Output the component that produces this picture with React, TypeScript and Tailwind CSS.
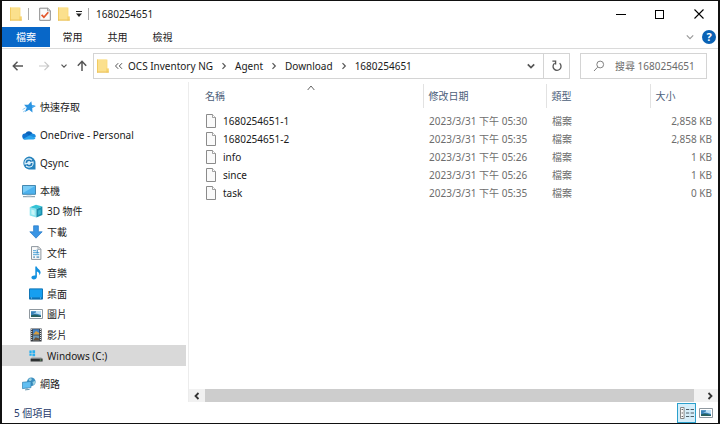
import type { ReactNode } from "react";

const icon = "h-3.5 w-3.5 shrink-0";

function Folder() {
  return (
    <svg viewBox="0 0 14 14" className={icon} aria-hidden="true">
      <path d="M1 .6h10.4v12.9H1z" fill="#f9d978" />
      <path d="M1.6 .6h9v12H1.6z" fill="#fbe08d" />
      <path d="M1 .6h1v12.9H1z" fill="#f2cb62" />
      <path d="M10.4 9.4h2.4v4.1h-2.4z" fill="#f7d26c" />
      <path d="M1 12.7h11.8v.8H1z" fill="#e6bc55" />
    </svg>
  );
}

function Checklist() {
  return (
    <svg viewBox="0 0 14 14" className={icon} aria-hidden="true">
      <path d="M1.7 1.2h8l2.6 2.4v9.7H1.7z" fill="#fafafa" stroke="#8a8a8a" />
      <path d="M9.5 1.2v2.6h2.8" fill="none" stroke="#8a8a8a" strokeWidth=".8" />
      <path d="M3.6 7.8l2.3 2.4 4.4-5" fill="none" stroke="#e2562b" strokeWidth="1.7" />
    </svg>
  );
}

function FileIcon() {
  return (
    <svg viewBox="0 0 12 14" className="h-3.5 w-3 shrink-0" aria-hidden="true">
      <path d="M1.5 .5h6l3 3v10h-9z" fill="#fafafa" stroke="#8b8b8b" />
      <path d="M7.5 .5v3h3" fill="#fff" stroke="#8b8b8b" strokeWidth=".8" />
    </svg>
  );
}

function Star() {
  return (
    <svg viewBox="0 0 14 14" className={icon} aria-hidden="true">
      <path d="M9.3 1.2l.6 3.9 3.8.8-3.5 2.2.3 4.5-3.4-2.8-4.2 2.1 1.8-4.2-2.6-3 4.1.1z" fill="#2b93e0" />
      <path d="M9.3 1.2l.6 3.9 3.8.8-3.5 2.2z" fill="#49aaf0" />
      <path d="M.6 9.6l3-1.8M1.2 11.9l2.4-1.6" stroke="#7fc3f0" strokeWidth=".9" />
    </svg>
  );
}

function Cloud() {
  return (
    <svg viewBox="0 0 14 14" className={icon} aria-hidden="true">
      <path d="M3.4 5.4a4 4 0 0 1 7.2.4L7 8.4 2 6.4z" fill="#0a62b8" />
      <path d="M3 5.5a3 3 0 0 1 2.4.5l5.4 4.6-8.2.9A3 3 0 0 1 .2 8.6 3 3 0 0 1 3 5.5z" fill="#1173cf" />
      <path d="M7.4 7.6c.8-1.2 2-1.9 3.3-1.8a3 3 0 0 1 3.1 2.9l-2.6 1.5z" fill="#1a8be0" />
      <path d="M7.3 7.6l6.3 2.2a2.3 2.3 0 0 1-2.2 1.7H2.8a2.7 2.7 0 0 1-1.7-.6z" fill="#2aa5ee" />
    </svg>
  );
}

function Qsync() {
  return (
    <svg viewBox="0 0 14 14" className={icon} aria-hidden="true">
      <path d="M7 .5a6.5 6.5 0 0 1 6.5 6.5v6.4H7A6.5 6.5 0 0 1 7 .5z" fill="#2583bd" />
      <circle cx="7" cy="7" r="4.7" fill="#d9eefa" />
      <circle cx="7" cy="7" r="2.7" fill="none" stroke="#2079b5" strokeWidth="1.6" strokeDasharray="6.6 1.8" />
      <path d="M8.6 5.4h2.6V2.9zM5.4 8.6H2.8v2.5z" fill="#2079b5" />
    </svg>
  );
}

function Monitor() {
  return (
    <svg viewBox="0 0 14 14" className={icon} aria-hidden="true">
      <path d="M.5 1.5h13v8.8H.5z" fill="#4db2ee" stroke="#4489b1" />
      <path d="M1 2h12L1 9z" fill="#7accf6" />
      <path d="M1 12.7h12" stroke="#7790a0" strokeWidth="1" />
      <path d="M4.5 12h5" stroke="#b7c5ce" />
    </svg>
  );
}

function Cube() {
  return (
    <svg viewBox="0 0 14 14" className={icon} aria-hidden="true">
      <path d="M.7 3.2L7.4 4.9v8.6L.7 11.4z" fill="#8fe6f0" />
      <path d="M.7 3.2L7 .8l6.4 1.8-6 2.3z" fill="#35c3d6" />
      <path d="M7.4 4.9l6-2.3v8.3l-6 2.6z" fill="#1a8fae" />
      <path d="M2.4 5.6l3.2.8v4.8l-3.2-1z" fill="#c9f5f8" />
      <path d="M9.2 6.4l2.6-1v4.4l-2.6 1.1z" fill="#39b3cc" />
    </svg>
  );
}

function DownArrow() {
  return (
    <svg viewBox="0 0 14 14" className={icon} aria-hidden="true">
      <path d="M4.6 .8h4.8v6h3.8L7 13.2.8 6.8h3.8z" fill="#3a95e4" stroke="#2478c8" strokeWidth=".7" />
    </svg>
  );
}

function Document() {
  return (
    <svg viewBox="0 0 14 14" className={icon} aria-hidden="true">
      <path d="M2.5 .6h6.8l2.6 2.6v10.2H2.5z" fill="#fbfbfb" stroke="#8f989f" />
      <path d="M9 .6v2.8h2.9" fill="none" stroke="#8f989f" strokeWidth=".8" />
      <path d="M4 4.7h3M4 6.7h6.3M4 8.7h6.3" stroke="#4ba3d8" />
      <path d="M4.2 10.3h1.8v1.8H4.2zM7.5 10.3h2.7v1.8H7.5z" fill="#78aaca" />
      <path d="M7.7 3.5h1v4h-1z" fill="#3181bc" />
    </svg>
  );
}

function Music() {
  return (
    <svg viewBox="0 0 14 14" className={icon} aria-hidden="true">
      <path d="M6.3 .4h1.4c.4 2.2 4.1 3.2 3.9 6.2-.1 1.2-.6 2-1.4 2.6.6-2.3-.9-3.2-2.3-3.7v5.3c0 1.5-1.4 2.7-3.1 2.7-1.4 0-2.4-.8-2.4-1.9 0-1.5 1.9-2.5 3.9-2.1z" fill="#1491df" />
    </svg>
  );
}

function Desktop() {
  return (
    <svg viewBox="0 0 14 14" className={icon} aria-hidden="true">
      <path d="M.5 1.9h13v10.2H.5z" fill="#169ff0" stroke="#1276b6" />
      <path d="M1 10.6h12v1H1z" fill="#0b5d99" />
      <path d="M2 11h1M11 11h1" stroke="#a9dcfa" strokeWidth=".8" />
    </svg>
  );
}

function Picture() {
  return (
    <svg viewBox="0 0 14 14" className={icon} aria-hidden="true">
      <path d="M.5 2.5h13v9H.5z" fill="#fff" stroke="#8f989f" />
      <path d="M2 4h10v6H2z" fill="#bfe2f7" />
      <path d="M2 4.2h5v1.3L4 6.5l4 .3L12 8v2H2z" fill="#3a83b9" />
      <path d="M2 8.2l4-.6 6 1.4v1H2z" fill="#27605f" />
    </svg>
  );
}

function Film() {
  return (
    <svg viewBox="0 0 14 14" className={icon} aria-hidden="true">
      <path d="M1.6 .5h11v13h-11z" fill="#383d43" />
      <path d="M2.7 1v12M11.5 1v12" stroke="#dfe5ea" strokeDasharray="1 1" />
      <path d="M4 1.3h6.2v5.2H4z" fill="#4382c6" />
      <path d="M4 7.4h6.2v5.2H4z" fill="#6b96b5" />
      <path d="M4 6.5l3-3.4 3.2 2v1.4z" fill="#d69d3f" />
      <path d="M4 12.6l2.6-3.4 3.6 1.4v2z" fill="#6a5138" />
    </svg>
  );
}

function Drive() {
  return (
    <svg viewBox="0 0 14 14" className={icon} aria-hidden="true">
      <path d="M.4 1.6h2.3v2.3H.4zM3.4 1.2h2.7v2.7H3.4zM.4 4.6h2.3v2.2H.4zM3.4 4.6h2.7v2.6H3.4z" fill="#28aeee" />
      <path d="M2.8 8.2h9.4l1.3 1.6H1.6z" fill="#a9adb0" />
      <path d="M1.6 9.6h12v2.9h-12z" fill="#2e3133" />
      <path d="M10.8 11h1.6" stroke="#8ce08c" strokeWidth=".8" />
    </svg>
  );
}

function Network() {
  return (
    <svg viewBox="0 0 14 14" className={icon} aria-hidden="true">
      <circle cx="9.3" cy="4.8" r="4.3" fill="#3c8fc0" />
      <path d="M6.5 2.2c2-1.6 3-1 3.3.4L8 5zM10.5 5l2.8-1.2c.3 2-.6 3.6-1.9 4.4z" fill="#9ad0e0" />
      <path d="M.4 5.3l8.6-.9v6.2l-8.6 1z" fill="#62bff2" stroke="#2e7cab" strokeWidth=".7" />
      <path d="M3 12.9l4.6-.5M5 11.2v1.4" stroke="#5a8ba5" strokeWidth=".9" />
    </svg>
  );
}

type StrokeProps = { className: string; d: string; width?: number };

function Stroke({ className, d, width = 1.2 }: StrokeProps) {
  return (
    <svg viewBox="0 0 12 12" className={className} fill="none" stroke="currentColor" strokeWidth={width} aria-hidden="true">
      <path d={d} />
    </svg>
  );
}

const RIGHT = "M4.5 3.2L7.3 6 4.5 8.8";
const DOWN = "M2.8 4.4L6 7.6l3.2-3.2";

const files = [
  { name: "1680254651-1", date: "2023/3/31 下午 05:30", size: "2,858 KB" },
  { name: "1680254651-2", date: "2023/3/31 下午 05:35", size: "2,858 KB" },
  { name: "info", date: "2023/3/31 下午 05:26", size: "1 KB" },
  { name: "since", date: "2023/3/31 下午 05:26", size: "1 KB" },
  { name: "task", date: "2023/3/31 下午 05:35", size: "0 KB" },
];

const places = [
  { label: "3D 物件", art: <Cube /> },
  { label: "下載", art: <DownArrow /> },
  { label: "文件", art: <Document /> },
  { label: "音樂", art: <Music /> },
  { label: "桌面", art: <Desktop /> },
  { label: "圖片", art: <Picture /> },
  { label: "影片", art: <Film /> },
  { label: "Windows (C:)", art: <Drive />, selected: true },
];

function TreeItem({ art, label }: { art: ReactNode; label: string }) {
  return (
    <button type="button" className="flex h-[21px] w-full items-center gap-1 pl-5 text-left">
      {art}
      {label}
    </button>
  );
}

export default function App() {
  return (
    <div className="flex min-h-screen flex-col border-x-2 border-y border-[#111] bg-white font-['Noto_Sans','Noto_Sans_CJK_TC',sans-serif] text-[10px] leading-4 text-[#1a1a1a]">
      <header className="flex h-[26px] items-center pl-[7px]">
        <Folder />
        <span className="mx-[5px] h-3 w-px bg-[#aaa]" />
        <button type="button" aria-label="內容" className="ml-1">
          <Checklist />
        </button>
        <button type="button" aria-label="新增資料夾" className="ml-[5px]">
          <Folder />
        </button>
        <button type="button" aria-label="自訂快速存取工具列" className="ml-1">
          <svg viewBox="0 0 8 8" className="h-2 w-2" aria-hidden="true">
            <path d="M1 1.5h6" stroke="#222" />
            <path d="M1 3.5h6L4 7z" fill="#222" />
          </svg>
        </button>
        <span className="mr-[7px] ml-[5px] h-3 w-px bg-[#aaa]" />
        <h1 className="flex-1">1680254651</h1>
        <button type="button" aria-label="最小化" className="flex h-full w-[39px] items-center justify-center">
          <span className="h-px w-2.5 bg-black" />
        </button>
        <button type="button" aria-label="最大化" className="flex h-full w-[39px] items-center justify-center">
          <span className="h-[9px] w-[9px] border border-black" />
        </button>
        <button type="button" aria-label="關閉" className="flex h-full w-[39px] items-center justify-center">
          <Stroke className="h-3 w-3 text-black" d="M1.5 1.5l9 9M10.5 1.5l-9 9" width={1.1} />
        </button>
      </header>

      <nav aria-label="功能區" className="flex h-[22px] items-start border-b border-[#dadada]">
        <button type="button" className="h-5 w-12 bg-[#0867c8] text-white">檔案</button>
        <button type="button" className="h-5 w-[45px]">常用</button>
        <button type="button" className="h-5 w-[45px]">共用</button>
        <button type="button" className="h-5 w-[45px]">檢視</button>
        <button type="button" aria-label="展開功能區" className="mt-1 ml-auto">
          <Stroke className="h-3 w-3 text-[#9a9a9a]" d={DOWN} />
        </button>
        <button type="button" aria-label="說明" className="mt-[3px] mr-0.5 ml-1.5 h-3.5 w-3.5 rounded-full bg-[#0a62b5] text-[11px] leading-3.5 font-bold text-white">
          ?
        </button>
      </nav>

      <div className="flex h-[33px] items-center pr-[11px] pl-2.5 text-[#555]">
        <button type="button" aria-label="上一頁">
          <Stroke className="h-3 w-3" d="M11 6H1.5M5.5 1.8L1.3 6l4.2 4.2" width={1.5} />
        </button>
        <button type="button" aria-label="下一頁" className="ml-3.5 text-[#c8c8c8]">
          <Stroke className="h-3 w-3" d="M1 6h9.5M6.5 1.8L10.7 6l-4.2 4.2" />
        </button>
        <button type="button" aria-label="最近的位置" className="ml-2">
          <Stroke className="h-3 w-3" d="M3.5 4.6L6 7.1l2.5-2.5" />
        </button>
        <button type="button" aria-label="上移一層" className="mr-[5px] ml-1.5">
          <Stroke className="h-3 w-3" d="M6 11V1.5M1.8 5.7L6 1.3l4.2 4.4" width={1.5} />
        </button>
        <nav aria-label="路徑" className="flex h-[26px] flex-1 items-center border border-[#d4d4d4] pl-0.5 text-[#1a1a1a]">
          <Folder />
          <Stroke className="mx-[3px] h-3 w-3 text-[#555]" d="M5.2 3.2L2.5 6l2.7 2.8M9 3.2L6.3 6 9 8.8" width={1} />
          <button type="button">OCS Inventory NG</button>
          <Stroke className="mx-[5px] h-3 w-3 text-[#555]" d={RIGHT} />
          <button type="button">Agent</button>
          <Stroke className="mx-[5px] h-3 w-3 text-[#555]" d={RIGHT} />
          <button type="button">Download</button>
          <Stroke className="mx-[5px] h-3 w-3 text-[#555]" d={RIGHT} />
          <button type="button">1680254651</button>
          <button type="button" aria-label="先前的位置" className="ml-auto flex h-full w-6 items-center justify-center text-[#555]">
            <Stroke className="h-3 w-3" d={DOWN} width={1.7} />
          </button>
          <button type="button" aria-label="重新整理" className="flex h-full w-[26px] items-center justify-center border-l border-[#d4d4d4] text-[#555]">
            <Stroke className="h-3 w-3" d="M3.6 3.2A4 4 0 1 0 8.6 3.3M1.4 1.2h3.2v3.2" width={1.3} />
          </button>
        </nav>
        <label className="ml-2.5 flex h-[26px] w-[127px] items-center border border-[#d4d4d4] pl-3">
          <Stroke className="h-3 w-3 shrink-0 text-[#808080]" d="M1 11l3.6-3.8M10.6 4.5a3.4 3.4 0 1 1-6.8 0 3.4 3.4 0 0 1 6.8 0z" width={1} />
          <input
            type="search"
            aria-label="搜尋 1680254651"
            placeholder="搜尋 1680254651"
            className="ml-2.5 w-full min-w-0 outline-none placeholder:text-[#6b6b6b]"
          />
        </label>
      </div>

      <div className="flex flex-1">
        <nav aria-label="資料夾" className="flex w-[187px] shrink-0 flex-col border-r border-[#ececec] pt-3.5 pr-0.5">
          <div className="flex flex-col gap-[7px]">
            <TreeItem art={<Star />} label="快速存取" />
            <TreeItem art={<Cloud />} label="OneDrive - Personal" />
            <TreeItem art={<Qsync />} label="Qsync" />
            <div>
              <TreeItem art={<Monitor />} label="本機" />
              <ul className="flex h-[165px] flex-col">
                {places.map((p) => (
                  <li key={p.label} className="flex flex-1">
                    <button
                      type="button"
                      className={`flex w-full items-center gap-1 pl-[27px] text-left ${p.selected ? "bg-[#d9d9d9]" : ""}`}
                    >
                      {p.art}
                      {p.label}
                    </button>
                  </li>
                ))}
              </ul>
            </div>
            <TreeItem art={<Network />} label="網路" />
          </div>
        </nav>

        <main className="flex min-w-0 flex-1 flex-col justify-between">
          <table className="mt-0.5 w-full table-fixed text-[#6d6d6d]">
            <colgroup>
              <col />
              <col className="w-[123px]" />
              <col className="w-[104px]" />
              <col className="w-[68px]" />
            </colgroup>
            <thead className="text-left text-[#4c607a]">
              <tr className="h-[22px]">
                <th className="pl-4 font-normal">
                  <div className="grid grid-cols-[1fr_auto_1fr] items-center">
                    <span>名稱</span>
                    <Stroke className="mr-1.5 mb-4 h-2 w-3 text-[#666]" d="M1 9l5-6 5 6" width={1.5} />
                  </div>
                </th>
                <th className="border-l border-[#e2e2e2] pl-[5px] font-normal">修改日期</th>
                <th className="border-l border-[#e2e2e2] pl-[5px] font-normal">類型</th>
                <th className="border-l border-[#e2e2e2] pl-[5px] font-normal">大小</th>
              </tr>
            </thead>
            <tbody className="before:block before:h-1">
              {files.map((f) => (
                <tr key={f.name} className="h-[18px]">
                  <td className="pl-4 text-[#1a1a1a]">
                    <div className="flex items-center gap-1.5">
                      <FileIcon />
                      {f.name}
                    </div>
                  </td>
                  <td className="pl-1.5">{f.date}</td>
                  <td className="pl-1.5">檔案</td>
                  <td className="pr-1.5 text-right">{f.size}</td>
                </tr>
              ))}
            </tbody>
          </table>

          <div className="flex h-[13px] bg-[#f1f1f1] text-[#333]">
            <button type="button" aria-label="向左捲動" className="flex w-4 items-center justify-center">
              <Stroke className="h-3 w-3" d="M7.5 3L4.5 6l3 3" width={1.8} />
            </button>
            <div className="flex-1 bg-[#cdcdcd]" />
            <button type="button" aria-label="向右捲動" className="flex w-6 items-center justify-end pr-0.5">
              <Stroke className="h-3 w-3" d="M4.5 3l3 3-3 3" width={1.8} />
            </button>
          </div>
        </main>
      </div>

      <footer className="flex h-[21px] items-center pl-3 text-[#1f3a6b]">
        <span>5 個項目</span>
        <button type="button" aria-label="詳細資料" aria-pressed="true" className="ml-auto flex h-5 w-[19px] items-center justify-center border border-[#2ba0cc] bg-[#d5eefa]">
          <svg viewBox="0 0 14 14" className={icon} aria-hidden="true">
            <path d="M.5 1.5h3.6v11H.5z" fill="#f8f8f8" stroke="#888" />
            <path d="M1.6 3.5h1.4M1.6 7h1.4M1.6 10.5h1.4" stroke="#666" />
            <path d="M6 3.5h3.2M10.6 3.5H14M6 7h3.2M10.6 7H14M6 10.5h3.2M10.6 10.5H14" stroke="#4f5f68" />
          </svg>
        </button>
        <button type="button" aria-label="大圖示" className="mr-[5px] ml-[3px]">
          <Picture />
        </button>
      </footer>
    </div>
  );
}
